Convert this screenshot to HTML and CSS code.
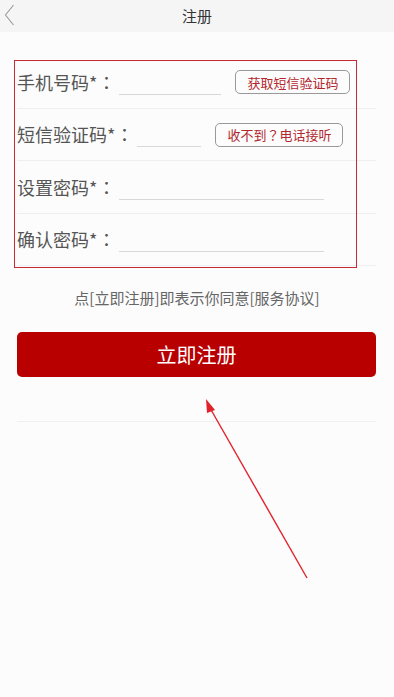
FILE: index.html
```html
<!DOCTYPE html>
<html lang="zh-CN">
<head>
<meta charset="utf-8">
<link rel="stylesheet" href="styles.css">
</head>
<body>
<div class="page">
  <header class="topbar">
    <svg class="back" width="12" height="24" viewBox="0 0 12 24"><polyline points="10.5,2 2.5,12 10.5,22" fill="none" stroke="#9a9a9a" stroke-width="1.1"/></svg>
    <div class="title">注册</div>
  </header>

  <div class="form">
    <div class="row">
      <span class="label">手机号码*<span class="punct" lang="zh-TW">：</span></span>
      <span class="input w1"></span>
      <span class="sbtn">获取短信验证码</span>
    </div>
    <div class="row">
      <span class="label">短信验证码*<span class="punct" lang="zh-TW">：</span></span>
      <span class="input w2"></span>
      <span class="sbtn">收不到<span class="punct" lang="zh-TW">？</span>电话接听</span>
    </div>
    <div class="row">
      <span class="label">设置密码*<span class="punct" lang="zh-TW">：</span></span>
      <span class="input w3"></span>
    </div>
    <div class="row">
      <span class="label">确认密码*<span class="punct" lang="zh-TW">：</span></span>
      <span class="input w3"></span>
    </div>
  </div>

  <p class="agree">点[立即注册]即表示你同意[服务协议]</p>
  <div class="submit">立即注册</div>
  <div class="sep"></div>

  <div class="mark"></div>
  <svg class="arrow" width="394" height="697" viewBox="0 0 394 697">
    <line x1="307" y1="578" x2="210" y2="408" stroke="#e0222a" stroke-width="1.4"/>
    <polygon points="206,399 215,410 207,413" fill="#e0222a"/>
  </svg>
</div>
</body>
</html>
```

FILE: styles.css
```css
html, body {
  margin: 0;
  padding: 0;
  background: #fcfcfc;
}
.page {
  position: relative;
  width: 394px;
  height: 697px;
  overflow: hidden;
  font-family: "Noto Sans CJK SC", "Noto Sans", sans-serif;
  color: #555;
}
.punct {
  font-family: "Noto Sans CJK TC", "Noto Sans CJK SC", sans-serif;
}
.topbar {
  height: 32px;
  background: #f5f5f5;
  display: flex;
  align-items: center;
  justify-content: center;
  position: relative;
}
.back {
  position: absolute;
  left: 3px;
  top: 3px;
}
.title {
  font-size: 15px;
  color: #333;
  line-height: 1;
  margin-top: -2px;
}
.form {
  margin: 24px 18px 0 17px;
}
.row {
  height: 52.5px;
  box-sizing: border-box;
  border-bottom: 1px solid #efefef;
  display: flex;
  align-items: center;
}
.label {
  font-size: 18px;
  color: #555;
  line-height: 1;
  white-space: nowrap;
}
.input {
  height: 22px;
  border-bottom: 1px solid #d8d8d8;
  margin-left: 4px;
  margin-top: 3px;
}
.w1 { width: 102px; }
.w2 { width: 64px; }
.w3 { width: 205px; }
.sbtn {
  margin-left: 14px;
  border: 1px solid #999;
  border-radius: 5px;
  height: 24px;
  box-sizing: border-box;
  padding: 0 11px;
  display: flex;
  align-items: center;
  font-size: 13px;
  color: #b3262c;
  white-space: nowrap;
  margin-top: 1px;
}
.agree {
  margin: 22px 0 0;
  text-align: center;
  font-size: 15px;
  color: #666;
  line-height: 20px;
}
.submit {
  margin: 24px 18px 0 17px;
  height: 45px;
  background: #b80000;
  border-radius: 5px;
  color: #fff;
  font-size: 20px;
  display: flex;
  align-items: center;
  justify-content: center;
}
.sep {
  margin: 44px 18px 0 17px;
  height: 1px;
  background: #f0f0f0;
}
.mark {
  position: absolute;
  left: 14px;
  top: 60px;
  width: 341px;
  height: 206px;
  border: 1.5px solid #c62a32;
}
.arrow {
  position: absolute;
  left: 0;
  top: 0;
  pointer-events: none;
}
```
